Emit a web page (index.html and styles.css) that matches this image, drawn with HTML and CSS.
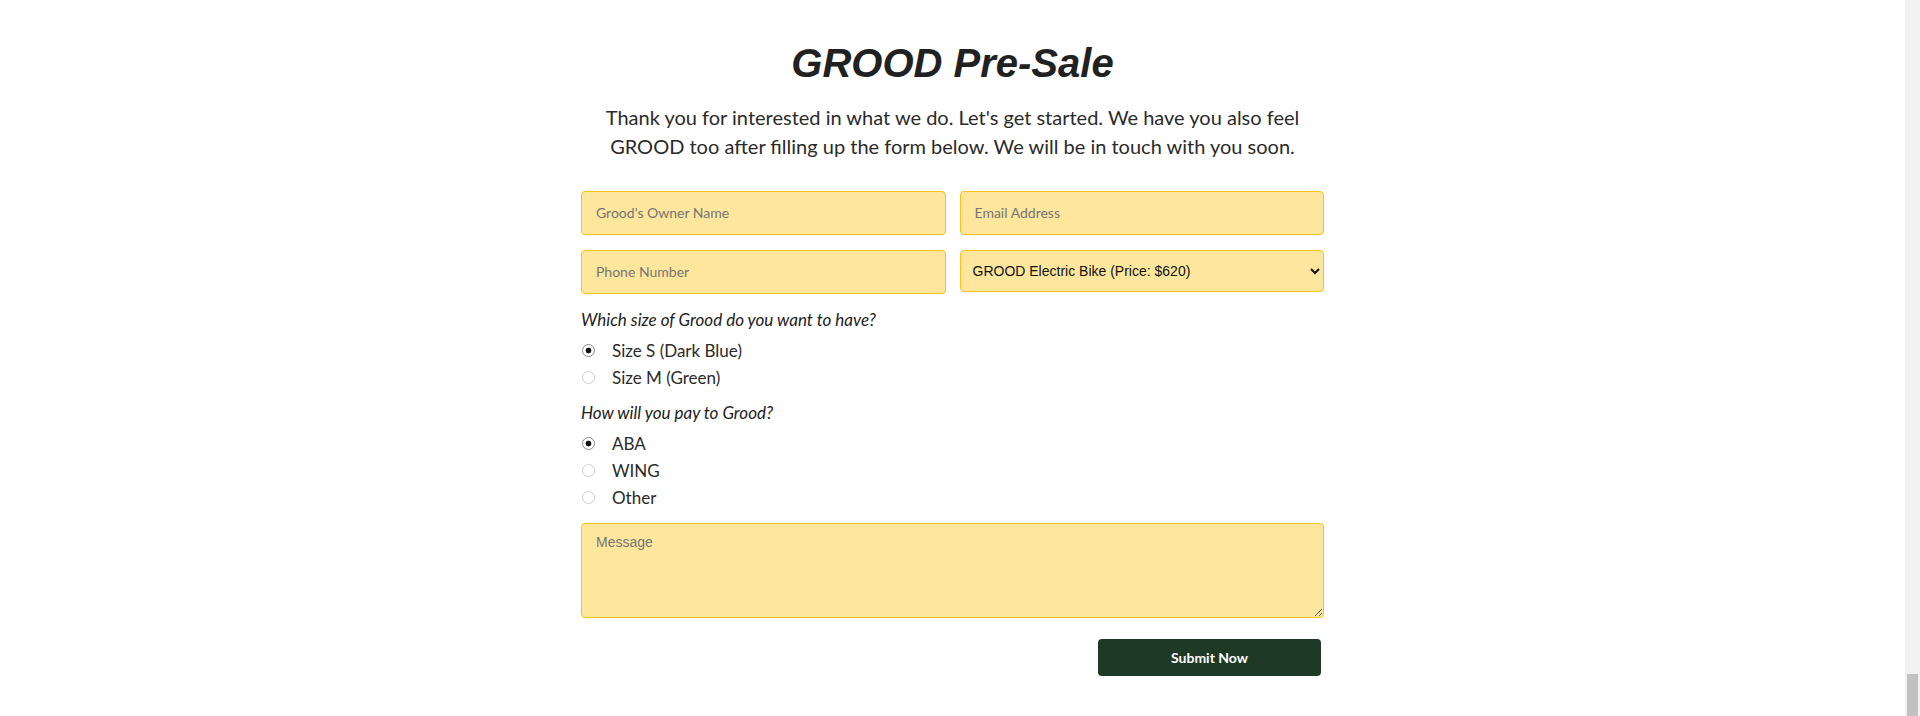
FILE: index.html
```html
<!DOCTYPE html>
<html lang="en">
<head>
<meta charset="utf-8">
<title>GROOD Pre-Sale</title>
<link rel="stylesheet" href="styles.css">
</head>
<body>
<div class="viewport">
  <main class="page">
    <h1 class="title">GROOD Pre-Sale</h1>
    <p class="intro">Thank you for interested in what we do. Let's get started. We have you also feel GROOD too after filling up the form below. We will be in touch with you soon.</p>
    <form class="form">
      <div class="grid">
        <input class="field" type="text" placeholder="Grood's Owner Name">
        <input class="field" type="email" placeholder="Email Address">
        <input class="field" type="tel" placeholder="Phone Number">
        <select class="field select">
          <option>GROOD Electric Bike (Price: $620)</option>
        </select>
      </div>
      <div class="group">
        <p class="question">Which size of Grood do you want to have?</p>
        <label class="option"><input class="radio" type="radio" name="size" checked><span>Size S (Dark Blue)</span></label>
        <label class="option"><input class="radio" type="radio" name="size"><span>Size M (Green)</span></label>
      </div>
      <div class="group">
        <p class="question">How will you pay to Grood?</p>
        <label class="option"><input class="radio" type="radio" name="pay" checked><span>ABA</span></label>
        <label class="option"><input class="radio" type="radio" name="pay"><span>WING</span></label>
        <label class="option"><input class="radio" type="radio" name="pay"><span>Other</span></label>
      </div>
      <textarea class="message" placeholder="Message"></textarea>
      <div class="actions">
        <button class="submit" type="button">Submit Now</button>
      </div>
    </form>
  </main>
</div>
<div class="scrollbar" aria-hidden="true"><div class="thumb"></div></div>
</body>
</html>
```
FILE: styles.css
```css
body {
  margin: 0;
  display: flex;
  background: #fff;
  font-family: "Lato", "Liberation Sans", sans-serif;
  color: #222;
}
.viewport {
  flex: 1;
  min-width: 0;
}
.scrollbar {
  flex: 0 0 15px;
  height: 100vh;
  display: flex;
  flex-direction: column;
  justify-content: flex-end;
  background: #f1f1f1;
}
.thumb {
  height: 42px;
  margin: 0 2px;
  background: #c1c1c1;
}
.page {
  width: 743px;
  margin: 0 auto;
  padding: 39px 0 40px;
}
.title {
  margin: 0;
  font-family: "Liberation Sans", Arial, sans-serif;
  font-size: 40px;
  font-weight: bold;
  font-style: italic;
  line-height: 48px;
  text-align: center;
  color: #212121;
}
.intro {
  margin: 16px auto 0;
  width: 730px;
  font-size: 20px;
  line-height: 28.8px;
  text-align: center;
  color: #2b2b2b;
}
.form {
  margin-top: 30px;
}
.grid {
  display: grid;
  grid-template-columns: 1fr 1fr;
  column-gap: 14px;
  row-gap: 15px;
  align-items: start;
}
.field {
  box-sizing: border-box;
  width: 100%;
  height: 44px;
  margin: 0;
  padding: 0 14px;
  border: 1px solid #f7c21b;
  border-radius: 4px;
  background: #fee79d;
  font-family: "Lato", sans-serif;
  font-size: 14px;
  color: #222;
  outline: none;
}
.field::placeholder {
  color: #757575;
}
.select {
  height: 42px;
  padding: 0 8px;
  font-family: "Liberation Sans", Arial, sans-serif;
  font-size: 14px;
  color: #111;
}
.group {
  margin-top: 14px;
}
.group + .group {
  margin-top: 10px;
}
.question {
  margin: 0 0 5px;
  font-size: 17px;
  line-height: 24px;
  font-style: italic;
  color: #222;
}
.option {
  display: flex;
  align-items: center;
  height: 27px;
  font-size: 17px;
  color: #2a2a2a;
}
.radio {
  appearance: none;
  -webkit-appearance: none;
  box-sizing: border-box;
  width: 13px;
  height: 13px;
  margin: 0 17px 0 1px;
  border: 1px solid #cfcfcf;
  border-radius: 50%;
  background: #fff;
}
.radio:checked {
  border-color: #8a8a8a;
  background: radial-gradient(circle, #111 0 2.6px, #fff 3.2px);
}
.message {
  display: block;
  box-sizing: border-box;
  width: 100%;
  height: 95px;
  margin-top: 12px;
  padding: 10px 14px;
  border: 1px solid #f7c21b;
  border-radius: 4px;
  background: #fee79d;
  font-family: "Liberation Sans", Arial, sans-serif;
  font-size: 14px;
  color: #222;
  resize: vertical;
  outline: none;
}
.message::placeholder {
  color: #757575;
}
.actions {
  display: flex;
  justify-content: flex-end;
  margin-top: 21px;
}
.submit {
  width: 223px;
  height: 37px;
  margin-right: 3px;
  border: none;
  border-radius: 4px;
  background: #1e3a27;
  color: #fff;
  font-family: "Lato", sans-serif;
  font-size: 14px;
  font-weight: bold;
  cursor: pointer;
}
```
